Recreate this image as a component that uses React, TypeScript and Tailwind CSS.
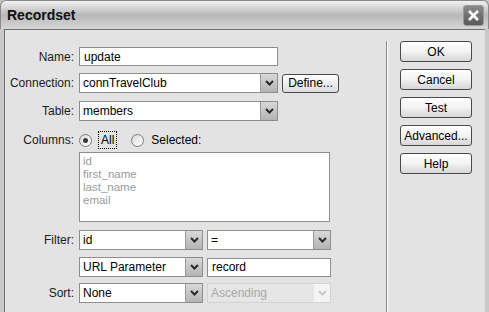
import { ReactNode } from "react";

function Arrow({ disabled }: { disabled?: boolean }) {
  return (
    <div
      className={`flex h-full w-[17px] items-center justify-center border-l ${
        disabled
          ? "border-[#e6e6e6] bg-[#f4f4f4]"
          : "border-[#9a9a9a] bg-gradient-to-b from-[#d8d8d8] to-[#b4b4b4]"
      }`}
    >
      <svg width="9" height="6" viewBox="0 0 9 6">
        <path
          d="M1 1 L4.5 4.5 L8 1"
          fill="none"
          stroke={disabled ? "#c8c8c8" : "#2a2a2a"}
          strokeWidth="2"
        />
      </svg>
    </div>
  );
}

function Select({
  value,
  width,
  disabled,
}: {
  value: string;
  width: string;
  disabled?: boolean;
}) {
  return (
    <div
      className={`flex h-[20px] ${width} items-stretch border ${
        disabled ? "border-[#d2d2d2] bg-[#e6e6e6]" : "border-[#8e8e8e] bg-white"
      }`}
    >
      <div
        className={`flex flex-1 items-center pl-[3px] ${
          disabled ? "text-[#a8a8a8]" : "text-black"
        }`}
      >
        {value}
      </div>
      <Arrow disabled={disabled} />
    </div>
  );
}

function Input({ value, width }: { value: string; width: string }) {
  return (
    <div
      className={`flex h-[19px] ${width} items-center border border-[#8e8e8e] bg-white pl-[4px]`}
    >
      {value}
    </div>
  );
}

function Row({
  label,
  children,
  className = "",
}: {
  label?: string;
  children: ReactNode;
  className?: string;
}) {
  return (
    <div className={`flex items-center ${className}`}>
      <div className="w-[70px] pr-[1px] text-right text-[#1a1a1a]">{label}</div>
      <div className="ml-[4px] flex items-center gap-[4px]">{children}</div>
    </div>
  );
}

function Radio({ checked }: { checked?: boolean }) {
  return (
    <div className="flex h-[13px] w-[13px] items-center justify-center rounded-full border border-[#7a7a7a] bg-gradient-to-br from-[#dcdcdc] to-white">
      {checked && <div className="h-[5px] w-[5px] rounded-full bg-[#3a3a3a]" />}
    </div>
  );
}

function Button({ label }: { label: string }) {
  return (
    <div className="flex h-[21px] w-[72px] items-center justify-center rounded-[3px] border border-[#4a4a4a] bg-gradient-to-b from-white via-[#f2f2f2] to-[#d6d6d6] text-black">
      {label}
    </div>
  );
}

export default function App() {
  return (
    <div
      className="h-[312px] w-[489px] overflow-hidden bg-[#c4c4c4] text-[12px] leading-none"
      style={{ fontFamily: '"Liberation Sans", Arial, sans-serif' }}
    >
      <div className="flex h-[29px] items-center justify-between rounded-t-[6px] border border-b-0 border-[#8a8a8a] bg-gradient-to-b from-[#f2f2f2] via-[#b8b8b8] to-[#d6d6d6] pl-[6px] pr-[4px]">
        <span className="text-[14px] font-bold text-[#111]">Recordset</span>
        <div className="flex h-[21px] w-[21px] items-center justify-center rounded-[3px] border border-[#9a9a9a] bg-gradient-to-b from-[#8a8a8a] to-[#5a5a5a]">
          <svg width="13" height="13" viewBox="0 0 13 13">
            <path d="M2 2 L11 11 M11 2 L2 11" stroke="white" strokeWidth="2.6" />
          </svg>
        </div>
      </div>
      <div className="flex h-[283px] border-x-[4px] border-[#c8c8c8]">
        <div className="flex flex-1 border-l border-t border-[#6e6e6e] bg-[#e3e3e3]">
          <div className="flex w-[381px] flex-col pt-[17px]">
            <Row label="Name:">
              <Input value="update" width="w-[199px]" />
            </Row>
            <Row label="Connection:" className="mt-[7px]">
              <Select value="connTravelClub" width="w-[199px]" />
              <div className="flex h-[19px] w-[57px] items-center justify-center rounded-[3px] border border-[#4a4a4a] bg-gradient-to-b from-white to-[#dcdcdc]">
                Define...
              </div>
            </Row>
            <Row label="Table:" className="mt-[8px]">
              <Select value="members" width="w-[199px]" />
            </Row>
            <Row label="Columns:" className="mt-[10px]">
              <Radio checked />
              <span className="ml-[2px] border border-dotted border-black px-[2px] py-[2px]">
                All
              </span>
              <span className="ml-[10px]">
                <Radio />
              </span>
              <span className="ml-[3px]">Selected:</span>
            </Row>
            <Row className="mt-[3px]">
              <div className="flex h-[70px] w-[251px] flex-col border border-[#8e8e8e] bg-white pl-[3px] pt-[2px] text-[11.5px] leading-[13px] text-[#9a9a9a]">
                <span>id</span>
                <span>first_name</span>
                <span>last_name</span>
                <span>email</span>
              </div>
            </Row>
            <Row label="Filter:" className="mt-[8px]">
              <Select value="id" width="w-[124px]" />
              <Select value="=" width="w-[124px]" />
            </Row>
            <Row className="mt-[7px]">
              <Select value="URL Parameter" width="w-[124px]" />
              <Input value="record" width="w-[124px]" />
            </Row>
            <Row label="Sort:" className="mt-[6px]">
              <Select value="None" width="w-[124px]" />
              <Select value="Ascending" width="w-[124px]" disabled />
            </Row>
          </div>
          <div className="mt-[11px] w-[2px] border-l border-r border-l-[#8a8a8a] border-r-white" />
          <div className="ml-[12px] flex flex-col gap-[7px] pt-[11px]">
            <Button label="OK" />
            <Button label="Cancel" />
            <Button label="Test" />
            <Button label="Advanced..." />
            <Button label="Help" />
          </div>
        </div>
      </div>
    </div>
  );
}
